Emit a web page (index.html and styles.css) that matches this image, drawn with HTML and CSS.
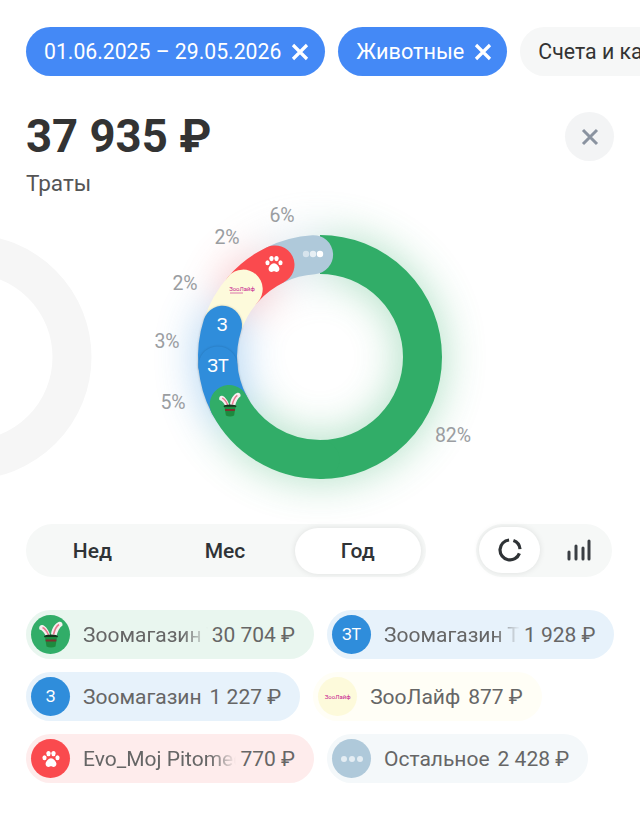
FILE: index.html
```html
<!DOCTYPE html>
<html lang="ru">
<head>
    <meta charset="UTF-8">
    <meta name="viewport" content="width=device-width, initial-scale=1.0">
    <title>Траты</title>
    <link rel="stylesheet" href="styles.css">
</head>
<body>

<svg class="defs" width="0" height="0">
    <symbol id="hat" viewBox="0 0 24 28">
        <path d="M11.500 15C10 10 7 5 3.500 4 1 3.500-.5 6 .5 8.500c3 .5 5 3.500 6.500 7z" fill="#f6f0f0"/>
        <path d="M12 15c0-6 3-12 7.500-14 2.500-1 4.500 1 4 3.500-3 2-5 6-6 10.500z" fill="#f6f0f0"/>
        <path d="M3.500 6.500c2.500 1 4.500 4 6 7.500M20 3.500c-3 2-4.500 6-5.500 10" stroke="#e8798f" stroke-width="1.600" fill="none"/>
        <ellipse cx="12" cy="15.500" rx="7" ry="2" fill="#14351d"/>
        <path d="M6 16h12l-1.500 9.500c-2.500 1.300-6.500 1.300-9 0z" fill="#1d8a3e"/>
        <path d="M6.500 18.500h11l-.3 2H6.800z" fill="#7d2f2f"/>
    </symbol>
    <symbol id="paw" viewBox="0 0 24 24">
        <ellipse cx="4.200" cy="10.500" rx="2.500" ry="3"/>
        <ellipse cx="9" cy="5.500" rx="2.600" ry="3.200"/>
        <ellipse cx="15" cy="5.500" rx="2.600" ry="3.200"/>
        <ellipse cx="19.800" cy="10.500" rx="2.500" ry="3"/>
        <path d="M12 11c3 0 6.500 4 6.500 7 0 2.500-2 3.500-3.500 3.500s-2-.8-3-.8-1.500.8-3 .8-3.500-1-3.500-3.500c0-3 3.500-7 6.500-7z"/>
    </symbol>
    <symbol id="cross" viewBox="0 0 18 18">
        <path d="M2 2l14 14M16 2L2 16" stroke="#fff" stroke-width="3.200"/>
    </symbol>
</svg>

<div class="chips">
    <div class="chip chip-on chip-dates">01.06.2025 – 29.05.2026 <svg class="chip-x" width="18" height="18"><use href="#cross"/></svg></div>
    <div class="chip chip-on chip-pets">Животные <svg class="chip-x" width="18" height="18"><use href="#cross"/></svg></div>
    <div class="chip">Счета и карты</div>
</div>

<div class="summary">
    <div>
        <h1>37 935 ₽</h1>
        <p>Траты</p>
    </div>
    <button class="close" type="button">
        <svg width="18" height="18" viewBox="0 0 18 18"><path d="M2 2l14 14M16 2L2 16" stroke="#8a93a0" stroke-width="3"/></svg>
    </button>
</div>

<svg class="chart" width="640" height="310" viewBox="0 200 640 310">
    <circle class="neighbour" cx="-31" cy="357" r="103"/>

    <!-- soft glow under the ring -->
    <g class="glow">
        <path class="seg" stroke="#31ad68" d="M320 254.500A102.500 102.500 0 1 1 229.200 404.500"/>
        <path class="seg" stroke="#2f8ddb" d="M229.200 404.500A102.500 102.500 0 0 1 222.500 325.300"/>
        <path class="seg" stroke="#fa4a4e" d="M243.200 289.100A102.500 102.500 0 0 1 275 264.900"/>
        <path class="seg" stroke="#afc9da" d="M275 264.900A102.500 102.500 0 0 1 313.600 254.700"/>
    </g>

    <path class="seg butt" stroke="#31ad68" d="M320 254.500A102.500 102.500 0 0 1 320 459.500"/>
    <path class="seg" stroke="#afc9da" d="M275 264.900A102.500 102.500 0 0 1 313.600 254.700"/>
    <path class="seg" stroke="#fa4a4e" d="M243.200 289.100A102.500 102.500 0 0 1 275 264.900"/>
    <path class="seg" stroke="#fdfadb" d="M222.500 325.300A102.500 102.500 0 0 1 243.200 289.100"/>
    <path class="seg cap" stroke="#2f8ddb" d="M217.900 365.900A102.500 102.500 0 0 1 222.500 325.300"/>
    <path class="seg cap" stroke="#2f8ddb" d="M229.200 404.500A102.500 102.500 0 0 1 217.900 365.900"/>
    <path class="seg" stroke="#31ad68" d="M320 459.500A102.500 102.500 0 0 1 229.200 404.500"/>

    <use href="#hat" x="219" y="392" width="22" height="26"/>
    <text class="seg-text" x="218" y="372">ЗТ</text>
    <text class="seg-text" x="222" y="331">З</text>
    <text class="seg-logo" x="242" y="291">ЗооЛайф</text>
    <path d="M230 293h13" stroke="#c7208f" stroke-width=".6"/>
    <use href="#paw" x="264" y="254" width="20" height="20" fill="#fff"/>
    <circle class="dot dot-a" cx="306" cy="254" r="3.200"/>
    <circle class="dot dot-b" cx="313" cy="254" r="3.200"/>
    <circle class="dot" cx="320" cy="254" r="3.200"/>

    <text class="pct" x="282" y="222">6%</text>
    <text class="pct" x="227" y="244">2%</text>
    <text class="pct" x="185" y="290">2%</text>
    <text class="pct" x="167" y="348">3%</text>
    <text class="pct" x="173" y="409">5%</text>
    <text class="pct" x="453" y="442">82%</text>
</svg>

<div class="controls">
    <div class="periods">
        <div class="period">Нед</div>
        <div class="period">Мес</div>
        <div class="period period-on"><span>Год</span></div>
    </div>
    <div class="views">
        <div class="view view-on">
            <svg width="26" height="26" viewBox="0 0 26 26" fill="none" stroke="#2f3336" stroke-width="3.200"><path d="M22.400 16.400A10 10 0 1 1 12.100 3M16.400 3.600A10 10 0 0 1 23 12.100"/></svg>
        </div>
        <div class="view">
            <svg width="26" height="26" viewBox="0 0 26 26" stroke="#3a3f44" stroke-width="3" stroke-linecap="round"><path d="M3 14v7M10 8v13M17 10v11M23 3v18"/></svg>
        </div>
    </div>
</div>

<div class="legend">
    <div class="item item-green">
        <span class="badge badge-green"><svg width="24" height="28"><use href="#hat"/></svg></span>
        <span class="name fade">Зоомагазин Т</span>
        <span>30 704 ₽</span>
    </div>
    <div class="item item-blue">
        <span class="badge badge-blue">ЗТ</span>
        <span class="name fade">Зоомагазин Т</span>
        <span>1 928 ₽</span>
    </div>
    <div class="item item-blue">
        <span class="badge badge-blue">З</span>
        <span class="name">Зоомагазин</span>
        <span>1 227 ₽</span>
    </div>
    <div class="item item-cream">
        <span class="badge badge-cream"><span class="logo">ЗооЛайф</span></span>
        <span class="name">ЗооЛайф</span>
        <span>877 ₽</span>
    </div>
    <div class="item item-red">
        <span class="badge badge-red"><svg width="20" height="20" fill="#fff"><use href="#paw"/></svg></span>
        <span class="name fade">Evo_Moj Pitomec</span>
        <span>770 ₽</span>
    </div>
    <div class="item item-grey">
        <span class="badge badge-grey"><i></i><i></i><i></i></span>
        <span class="name">Остальное</span>
        <span>2 428 ₽</span>
    </div>
</div>

</body>
</html>
```

FILE: styles.css
```css
* {
    box-sizing: border-box;
}
html, body {
    height: 815px;
    overflow: hidden;
}
body {
    margin: 0;
    background: #fff;
    font-family: Roboto, "Liberation Sans", sans-serif;
    color: #2f3336;
}
.defs {
    position: absolute;
}

/* filter chips */
.chips {
    display: flex;
    gap: 13px;
    padding: 27px 0 0 26px;
    white-space: nowrap;
    overflow: hidden;
}
.chip {
    flex: none;
    display: flex;
    align-items: center;
    height: 49px;
    padding: 0 15px 0 18px;
    border-radius: 25px;
    background: #f6f7f7;
    font-size: 21.3px;
    color: #333;
}
.chip-on {
    background: #4489f6;
    color: #fff;
}
.chip-dates {
    padding-right: 16px;
    font-size: 21.2px;
}
.chip-pets {
    font-size: 21.7px;
}
.chip-x {
    margin-left: 10px;
}

/* total */
.summary {
    display: flex;
    justify-content: space-between;
    padding: 36px 26px 0;
}
h1 {
    margin: 0;
    font-size: 45.5px;
    line-height: 50px;
    font-weight: 700;
    color: #333;
}
.summary p {
    margin: 8px 0 0;
    font-size: 22.5px;
    line-height: 26px;
    color: #555;
}
.close {
    display: flex;
    align-items: center;
    justify-content: center;
    width: 49px;
    height: 49px;
    padding: 0;
    border: none;
    border-radius: 50%;
    background: #f3f4f5;
}

/* donut */
.chart {
    display: block;
    margin-top: 4px;
    overflow: visible;
}
.neighbour {
    fill: none;
    stroke: #f6f6f6;
    stroke-width: 39px;
}
.seg {
    fill: none;
    stroke-width: 39px;
    stroke-linecap: round;
}
.butt {
    stroke-linecap: butt;
}
.cap {
    filter: drop-shadow(0 0 1px rgba(0, 0, 0, .2));
}
.glow {
    opacity: .42;
    filter: blur(22px);
}
.seg-text {
    fill: #fff;
    font-size: 18px;
    text-anchor: middle;
}
.seg-logo {
    fill: #c7208f;
    font-size: 6px;
    text-anchor: middle;
}
.dot {
    fill: #fff;
}
.dot-a {
    fill-opacity: .5;
}
.dot-b {
    fill-opacity: .7;
}
.pct {
    fill: #9a9da1;
    font-size: 19.5px;
    text-anchor: middle;
}

/* period and view switches */
.controls {
    display: flex;
    justify-content: space-between;
    margin-top: 14px;
    padding: 0 28px 0 26px;
}
.periods, .views {
    display: flex;
    height: 53px;
    border-radius: 27px;
    background: #f6f8f7;
}
.periods {
    width: 400px;
    padding-right: 2px;
}
.views {
    width: 136px;
}
.period {
    flex: 1;
    display: flex;
    align-items: center;
    justify-content: center;
    font-size: 21px;
    font-weight: 500;
}
.period-on span, .view-on {
    display: flex;
    align-items: center;
    justify-content: center;
    background: #fff;
    box-shadow: 0 0 6px rgba(0, 0, 0, .1);
}
.period-on span {
    width: 126px;
    height: 46px;
    border-radius: 23px;
}
.view {
    flex: 1;
    display: flex;
    align-items: center;
    justify-content: center;
}
.view-on {
    flex: none;
    width: 61px;
    height: 46px;
    margin: 3px 6px 0 3px;
    border-radius: 23px;
}

/* legend */
.legend {
    display: flex;
    flex-wrap: wrap;
    gap: 13px;
    margin-top: 33px;
    padding-left: 26px;
}
.item {
    display: flex;
    align-items: center;
    gap: 4px;
    max-width: 288px;
    height: 49px;
    padding: 0 19px 0 5px;
    border-radius: 25px;
    font-size: 21px;
    color: #666;
    white-space: nowrap;
}
.item span {
    flex: none;
}
.item-green { background: #e9f6ef; }
.item-blue { background: #e7f2fb; }
.item-cream { background: #fffef6; }
.item-red { background: #feecec; }
.item-grey { background: #f4f8fa; }
.badge {
    display: flex;
    align-items: center;
    justify-content: center;
    gap: 2px;
    width: 39px;
    height: 39px;
    margin-right: 9px;
    border-radius: 50%;
    color: #fff;
    font-size: 16px;
}
.badge-green { background: #31ad68; }
.badge-blue { background: #2f8ddb; }
.badge-cream { background: #fdfadb; }
.badge-red { background: #fa4a4e; }
.badge-grey { background: #afc9da; }
.badge-grey i {
    width: 6px;
    height: 6px;
    border-radius: 50%;
    background: #e4edf3;
}
.logo {
    font-size: 6px;
    color: #c7208f;
}
.name {
    padding-right: 4px;
}
.item .fade {
    flex: 1 1 0;
    min-width: 0;
    padding-right: 0;
    overflow: hidden;
    mask-image: linear-gradient(to right, #000 calc(100% - 26px), transparent);
}
```
